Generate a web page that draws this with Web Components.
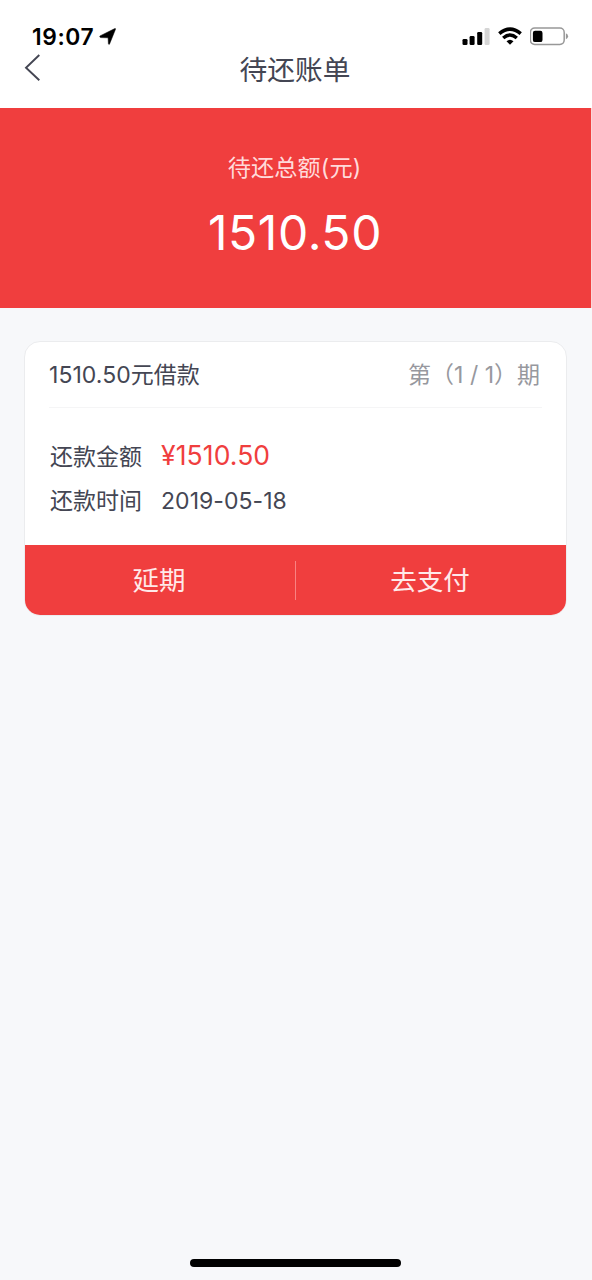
<!DOCTYPE html>
<html lang="zh-CN">
<head>
<meta charset="utf-8">
<title>待还账单</title>
<style>
body{margin:0;background:#f7f8fa;font-family:Inter,"Noto Sans CJK SC",sans-serif;font-weight:400;color:#444653}
</style>
</head>
<body>
<bill-page></bill-page>
<script>
const define=(name,html)=>customElements.define(name,class extends HTMLElement{
  constructor(){super();this.attachShadow({mode:'open'}).innerHTML=html;}
});

define('status-bar',`<style>
:host{display:flex;height:50px;box-sizing:border-box;padding:22px 23px 0 32px;background:#fff;color:#000}
.time{font-size:22.8px;font-weight:600;line-height:30px;letter-spacing:.6px;width:67px;white-space:nowrap}
svg{display:block;flex:none}
.loc{margin-top:6px}
.cell{margin:6px 8px 0 auto}
.wifi{margin:5px 8px 0 0}
.bat{margin-top:5px}
</style>
<span class="time"><slot></slot></span>
<svg class="loc" width="18" height="18" viewBox="0 0 18 18"><path d="M1 7.900 15.800.6q1-.3.700.7L10.600 15.900q-.8 1.200-1.200-.2L9.100 9.800 1.600 9.600q-1.400-.5-.6-1.700Z" stroke="#000" stroke-width=".5"/></svg>
<svg class="cell" width="28" height="18" viewBox="0 0 28 18"><rect x="0.500" y="11" width="5" height="6" rx="1.3"/><rect x="7.600" y="8" width="5" height="9" rx="1.3"/><rect x="15.200" y="4" width="5" height="13" rx="1.3"/><rect x="22.600" y="0" width="5" height="17" rx="1.3" fill="#d5d5d5"/></svg>
<svg class="wifi" width="24" height="18" viewBox="0 0 24 18" fill="none" stroke="#000"><path d="M1.300 6.700Q12-2.500 22.700 6.700" stroke-width="3.5"/><path d="M5.200 10.900Q12 4.900 18.800 10.900" stroke-width="3.400"/><path d="M8.500 14.200Q12 11.200 15.500 14.200L12 17.700Z" fill="#000" stroke="none"/></svg>
<svg class="bat" width="39" height="20" viewBox="0 0 39 20"><rect x=".4" y="1.100" width="33.800" height="16.300" rx="4.300" fill="none" stroke="#989898" stroke-width="1.500"/><rect x="2.900" y="3.700" width="9.600" height="11.400" rx="2.200"/><path d="M35.900 6.300Q38.100 7.300 38.100 9.300T35.900 12.300Z" fill="#989898"/></svg>`);

define('nav-bar',`<style>
:host{display:grid;grid-template-columns:60px 1fr 62px;height:58px;background:#fff}
svg{display:block;margin:3px 0 0 23px}
.title{text-align:center;font-size:27.700px;line-height:38px;padding-top:1px}
</style>
<svg width="20" height="30" viewBox="0 0 20 30" fill="none" stroke="#444653" stroke-width="1.900"><path d="M16.300 2 3 14.700 16.300 27.300"/></svg>
<span class="title"><slot></slot></span><span></span>`);

define('total-banner',`<style>
:host{display:flex;flex-direction:column;align-items:center;box-sizing:border-box;height:200px;border-right:1px solid #fbd5d6;background:#f03e3e;background-clip:padding-box;color:#fff}
.label{margin:44px 2px 0 0;font-size:23.200px;line-height:32px;letter-spacing:.1px;color:#ffdada;white-space:nowrap}
.amount{margin:19px 1px 0 0;font-size:48px;line-height:60px;letter-spacing:.6px}
</style>
<span class="label"><slot name="label"></slot></span>
<span class="amount"><slot name="amount"></slot></span>`);

define('bill-row',`<style>
:host{display:flex;height:32px;line-height:32px;font-size:23px;white-space:nowrap}
.k{width:111px}
</style>
<span class="k"><slot name="label"></slot></span><span><slot></slot></span>`);

define('bill-card',`<style>
:host{display:flex;flex-direction:column;box-sizing:border-box;width:543px;height:275px;margin:33px 0 0 24px;border:1px solid #ebecee;border-radius:16px;background:#fff;overflow:hidden}
header{display:flex;justify-content:space-between;box-sizing:border-box;height:66px;margin:0 24px;padding-top:17px;border-bottom:1px solid #f5f5f6;font-size:23px;line-height:32px;white-space:nowrap}
.term{color:#97989e;padding-right:2px}
.body{flex:1;display:flex;flex-direction:column;gap:12px;padding:33px 25px 0}
footer{display:grid;grid-template-columns:1fr 1px 1fr;align-items:center;height:70px;background:#f03e3e;color:#ffe9e9;font-size:26.500px;text-align:center;line-height:40px}
footer span{padding-right:2px}
i{height:39px;background:#f98282}
</style>
<header><span><slot name="title"></slot></span><span class="term"><slot name="term"></slot></span></header>
<div class="body"><slot></slot></div>
<footer><span><slot name="extend"></slot></span><i></i><span><slot name="pay"></slot></span></footer>`);

define('home-indicator',`<style>
:host{display:block;width:211px;height:8px;border-radius:4px;background:#000;margin:auto auto 13px 190px}
</style>`);

define('bill-page',`<style>
:host{display:flex;flex-direction:column;width:592px;height:1280px;overflow:hidden}
.n{letter-spacing:.05px}
.money{display:block;line-height:28px;color:#f03e3e;font-size:26.500px;letter-spacing:.1px}
</style>
<status-bar>19:07</status-bar>
<nav-bar>待还账单</nav-bar>
<total-banner><span slot="label">待还总额(元)</span><span slot="amount">1510.50</span></total-banner>
<bill-card>
<span slot="title"><span class="n">1510.50</span>元借款</span>
<span slot="term">第（1 / 1）期</span>
<bill-row><span slot="label">还款金额</span><span class="money">¥1510.50</span></bill-row>
<bill-row><span slot="label">还款时间</span><span class="n">2019-05-18</span></bill-row>
<span slot="extend">延期</span><span slot="pay">去支付</span>
</bill-card>
<home-indicator></home-indicator>`);
</script>
</body>
</html>
